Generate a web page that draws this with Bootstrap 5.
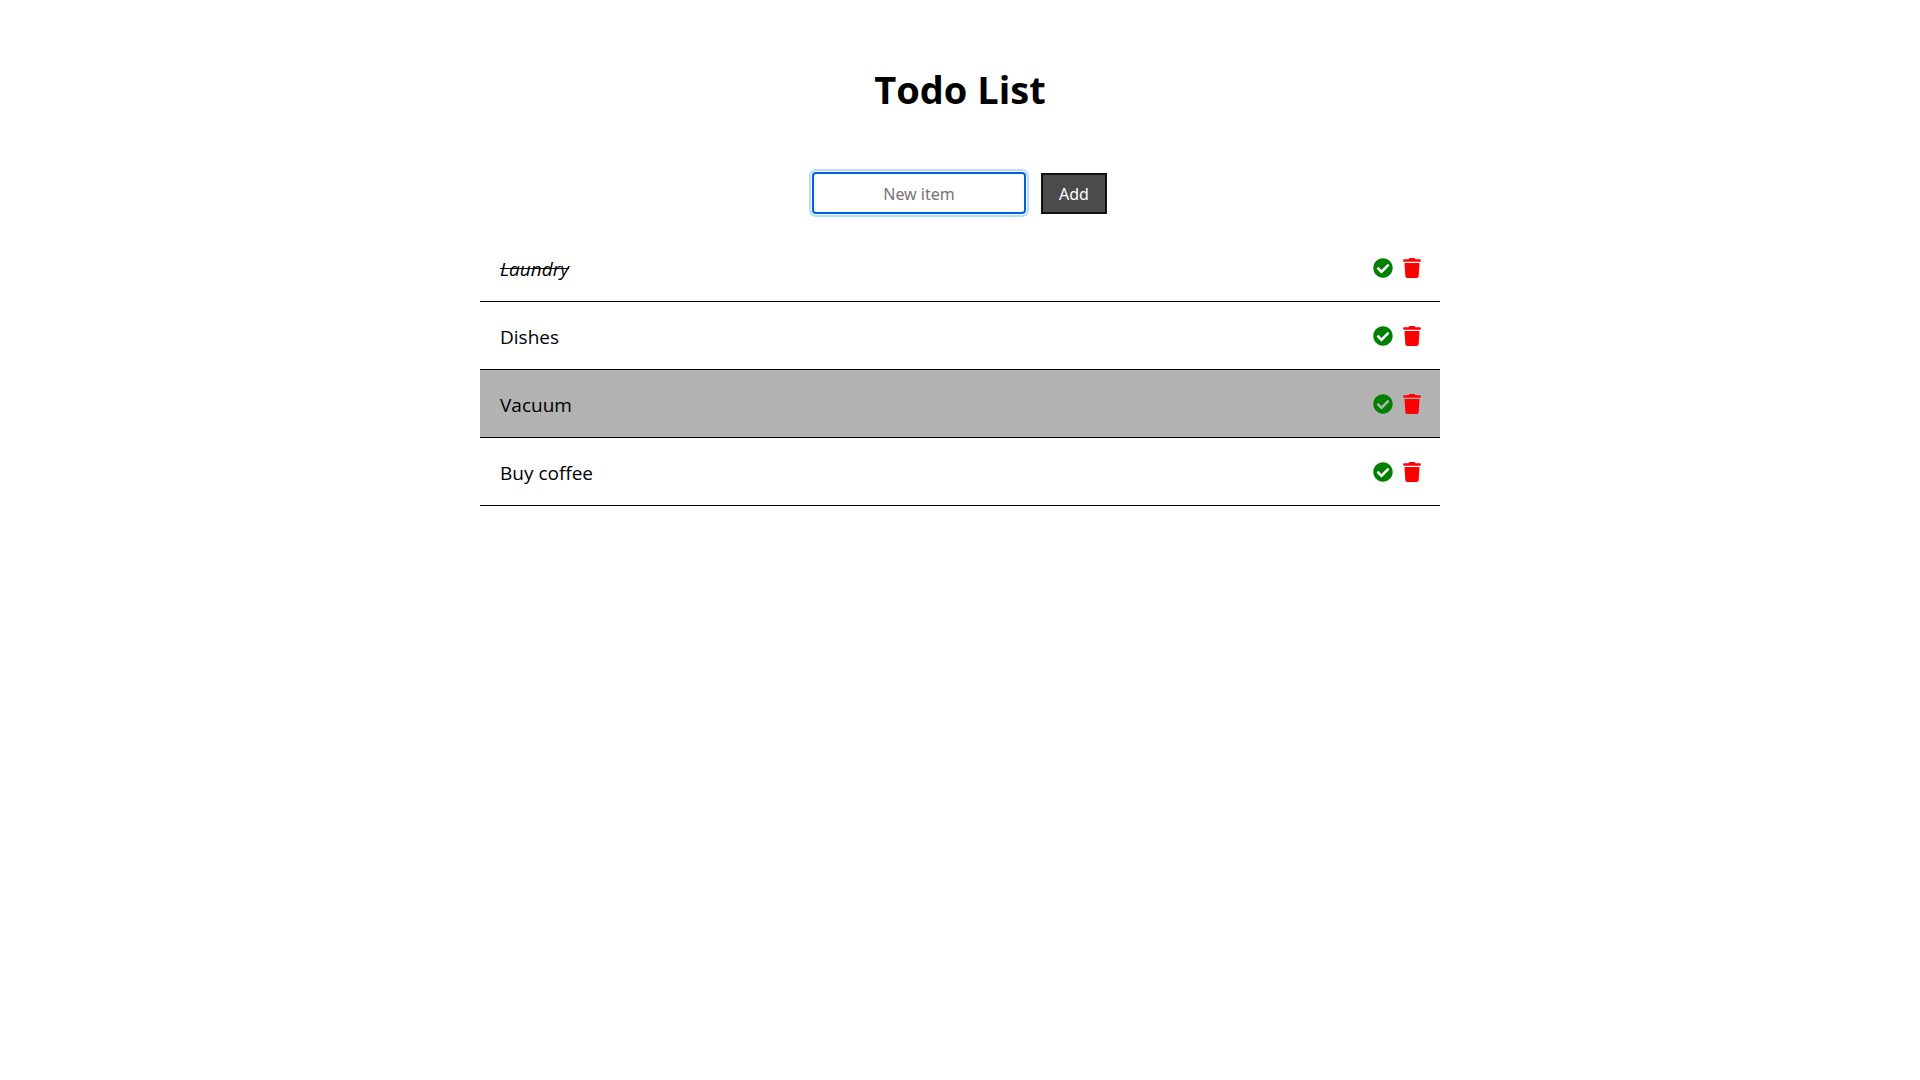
<!DOCTYPE html>
<html lang="en">
<head>
<meta charset="utf-8">
<meta name="viewport" content="width=device-width, initial-scale=1">
<title>Todo List</title>
<link href="https://cdn.jsdelivr.net/npm/bootstrap@5.3.0/dist/css/bootstrap.min.css" rel="stylesheet">
<style>
  body { font-family: "Segoe UI", "Open Sans", "Noto Sans", sans-serif; color: #000; background: #fff; }
  .todo-title { font-size: 38px; line-height: 54px; font-weight: 700; margin: 62px 0 56px; }
  .todo-form { gap: 15px; margin-bottom: 20px; padding-right: 1px; }
  .todo-input { width: 214px; height: 42px; border: 2px solid #0060df; border-radius: 4px; font-family: "Noto Sans", sans-serif; font-size: 16px;
    padding: 2px 2px 0; box-shadow: 0 0 0 1px #fff, 0 0 0 3px #b3dffc; outline: 0; }
  .todo-input::placeholder { color: #757575; opacity: 1; }
  .todo-add { height: 41px; width: 66px; border: 2px solid #101010; background: #4b4b4b; color: #fff; font-family: "Noto Sans", sans-serif; font-size: 16px; }
  .todo-item { height: 68px; padding: 0 19px 0 20px; border-bottom: 1px solid #000; font-size: 19px; }
  .todo-item.active-row { background: #b2b2b2; }
  .todo-text { padding-top: 3px; }
  .todo-actions { gap: 9px; }
  .icon-btn { border: 0; padding: 0; background: none; line-height: 0; }
  .icon-btn svg { height: 20px; fill: currentColor; }
  .check-btn { color: #008000; }
  .trash-btn { color: #f00; }
</style>
<script src="https://cdn.jsdelivr.net/npm/bootstrap@5.3.0/dist/js/bootstrap.bundle.min.js" defer></script>
</head>
<body>
<svg class="d-none" aria-hidden="true">
  <symbol id="check" viewBox="0 0 512 512"><path d="M504 256c0 136.967-111.033 248-248 248S8 392.967 8 256 119.033 8 256 8s248 111.033 248 248zM227.314 387.314l184-184c6.248-6.248 6.248-16.379 0-22.627l-22.627-22.627c-6.248-6.248-16.379-6.249-22.628 0L216 308.118l-70.059-70.059c-6.248-6.248-16.379-6.248-22.628 0l-22.627 22.627c-6.248 6.248-6.248 16.379 0 22.627l104 104c6.249 6.249 16.379 6.249 22.628.001z"/></symbol>
  <symbol id="trash" viewBox="0 0 448 512"><path d="M432 32H312l-9.4-18.7A24 24 0 0 0 281.1 0H166.8a23.72 23.72 0 0 0-21.4 13.3L136 32H16A16 16 0 0 0 0 48v32a16 16 0 0 0 16 16h416a16 16 0 0 0 16-16V48a16 16 0 0 0-16-16zM53.2 467a48 48 0 0 0 47.9 45h245.8a48 48 0 0 0 47.9-45L416 128H32z"/></symbol>
</svg>
<main class="w-50 mx-auto">
  <div class="d-flex flex-column">
    <h1 class="todo-title text-center">Todo List</h1>
    <form class="todo-form d-flex justify-content-center align-items-end">
      <input id="newItem" class="todo-input text-center" type="text" placeholder="New item" aria-label="New item">
      <button class="todo-add" type="button">Add</button>
    </form>
    <ul class="list-unstyled mb-0">
      <li class="todo-item d-flex align-items-center justify-content-between">
        <span class="todo-text fst-italic text-decoration-line-through">Laundry</span>
        <span class="todo-actions d-flex"><button class="icon-btn check-btn" type="button" aria-label="Complete"><svg width="22"><use href="#check"/></svg></button><button class="icon-btn trash-btn" type="button" aria-label="Delete"><svg width="18"><use href="#trash"/></svg></button></span>
      </li>
      <li class="todo-item d-flex align-items-center justify-content-between">
        <span class="todo-text">Dishes</span>
        <span class="todo-actions d-flex"><button class="icon-btn check-btn" type="button" aria-label="Complete"><svg width="22"><use href="#check"/></svg></button><button class="icon-btn trash-btn" type="button" aria-label="Delete"><svg width="18"><use href="#trash"/></svg></button></span>
      </li>
      <li class="todo-item active-row d-flex align-items-center justify-content-between">
        <span class="todo-text">Vacuum</span>
        <span class="todo-actions d-flex"><button class="icon-btn check-btn" type="button" aria-label="Complete"><svg width="22"><use href="#check"/></svg></button><button class="icon-btn trash-btn" type="button" aria-label="Delete"><svg width="18"><use href="#trash"/></svg></button></span>
      </li>
      <li class="todo-item d-flex align-items-center justify-content-between">
        <span class="todo-text">Buy coffee</span>
        <span class="todo-actions d-flex"><button class="icon-btn check-btn" type="button" aria-label="Complete"><svg width="22"><use href="#check"/></svg></button><button class="icon-btn trash-btn" type="button" aria-label="Delete"><svg width="18"><use href="#trash"/></svg></button></span>
      </li>
    </ul>
  </div>
</main>
</body>
</html>
